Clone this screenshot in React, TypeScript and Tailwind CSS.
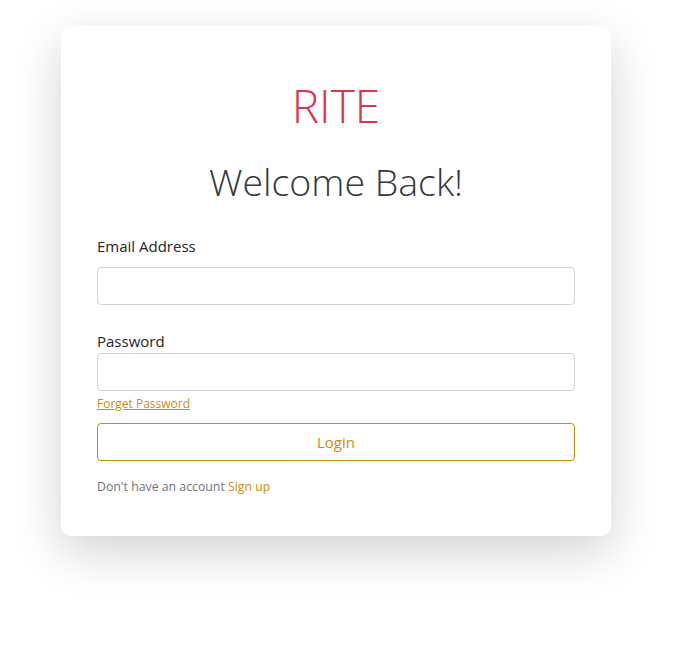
export default function App() {
  return (
    <div className="min-h-screen bg-white font-['Open_Sans',sans-serif] pt-[26px] pb-[60px]">
      <div className="ml-[61px] w-[550px] bg-white rounded-[10px] shadow-[0_16px_48px_rgba(0,0,0,0.175)] px-[36px] pt-[51px] pb-[40px]">
        {/* Brand */}
        <h1 className="text-center text-[46px] leading-[56px] font-light text-[#dc3545]">RITE</h1>
        <h2 className="text-center text-[37.5px] leading-[45px] font-light text-[#343a40] mt-[26px]">Welcome Back!</h2>

        <form className="mt-[30px]" onSubmit={(e) => e.preventDefault()}>
          <label className="block text-[15px] leading-[24px] text-[#212529] mb-[9px]">Email Address</label>
          <input
            type="email"
            className="block w-full h-[38px] border border-[#ced4da] rounded-[4px] px-3 outline-none"
          />

          <label className="block text-[15px] leading-[24px] text-[#212529] mt-[24px]">Password</label>
          <input
            type="password"
            className="block w-full h-[38px] border border-[#ced4da] rounded-[4px] px-3 outline-none"
          />
          <a href="#" className="block w-fit text-[12px] leading-[18px] text-[#d18b0a] underline mt-[4px]">
            Forget Password
          </a>

          <button
            type="submit"
            className="block w-full h-[38px] mt-[10px] border border-[#d18b0a] rounded-[4px] text-[15px] text-[#d18b0a]"
          >
            Login
          </button>

          <p className="text-[12.3px] leading-[18px] text-[#6c757d] mt-[17px]">
            Don't have an account{' '}
            <a href="#" className="text-[#d18b0a]">Sign up</a>
          </p>
        </form>
      </div>
    </div>
  );
}
